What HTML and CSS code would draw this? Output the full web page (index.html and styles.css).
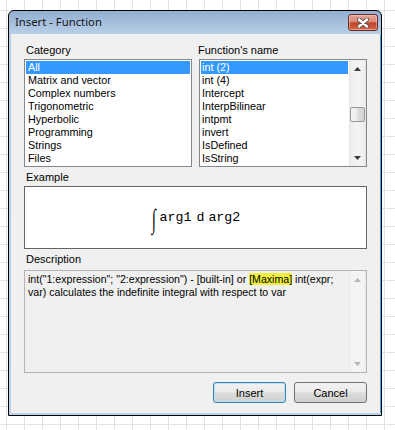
FILE: index.html
```html
<!DOCTYPE html>
<html>
<head>
<meta charset="utf-8">
<link rel="stylesheet" href="styles.css">
</head>
<body>
<div class="win">
  <div class="titlebar">
    <span class="title">Insert - Function</span>
    <div class="close">
      <svg width="12" height="10" viewBox="0 0 12 10">
        <path d="M2 1.5 L10 8.5 M10 1.5 L2 8.5" stroke="#5c4a48" stroke-width="4.2" stroke-linecap="round" fill="none"/>
        <path d="M2 1.5 L10 8.5 M10 1.5 L2 8.5" stroke="#ffffff" stroke-width="2.4" stroke-linecap="round" fill="none"/>
      </svg>
    </div>
  </div>
  <div class="client">
    <div class="lists">
      <div class="group cat">
        <div class="label">Category</div>
        <div class="listbox">
          <div class="items">
            <div class="item sel">All</div>
            <div class="item">Matrix and vector</div>
            <div class="item">Complex numbers</div>
            <div class="item">Trigonometric</div>
            <div class="item">Hyperbolic</div>
            <div class="item">Programming</div>
            <div class="item">Strings</div>
            <div class="item">Files</div>
          </div>
        </div>
      </div>
      <div class="group fn">
        <div class="label label-fn">Function's name</div>
        <div class="listbox">
          <div class="items items-fn">
            <div class="item sel">int (2)</div>
            <div class="item">int (4)</div>
            <div class="item">Intercept</div>
            <div class="item">InterpBilinear</div>
            <div class="item">intpmt</div>
            <div class="item">invert</div>
            <div class="item">IsDefined</div>
            <div class="item">IsString</div>
          </div>
          <div class="sb">
            <div class="sb-btn"><svg width="7" height="4" viewBox="0 0 7 4"><polygon points="3.5,0 7,4 0,4" fill="#3a3a3a"/></svg></div>
            <div class="thumb"></div>
            <div class="sb-btn sb-down"><svg width="7" height="4" viewBox="0 0 7 4"><polygon points="0,0 7,0 3.5,4" fill="#3a3a3a"/></svg></div>
          </div>
        </div>
      </div>
    </div>
    <div class="label label-sec">Example</div>
    <div class="example">
      <span class="integral">∫</span>
      <span class="mono">arg1</span>
      <span class="mono d">d</span>
      <span class="mono">arg2</span>
    </div>
    <div class="label label-sec">Description</div>
    <div class="desc">
      <div class="desc-text">
        <div class="line"><span>int("1:expression"; "2:expression") - [built-in] or</span> <mark class="hl">[Maxima]</mark> <span>int(expr;</span></div>
        <div class="line">var) calculates the indefinite integral with respect to var</div>
      </div>
      <div class="sb sb-off">
        <div class="sb-btn"><svg width="7" height="4" viewBox="0 0 7 4"><polygon points="3.5,0 7,4 0,4" fill="#b4b4b4"/></svg></div>
        <div class="sb-btn sb-down"><svg width="7" height="4" viewBox="0 0 7 4"><polygon points="0,0 7,0 3.5,4" fill="#b4b4b4"/></svg></div>
      </div>
    </div>
    <div class="buttons">
      <button class="btn focus">Insert</button>
      <button class="btn">Cancel</button>
    </div>
  </div>
</div>
</body>
</html>
```
FILE: styles.css
```css
html, body {
  margin: 0;
}
body {
  padding: 10px 0 0 8px;
  height: 430px;
  box-sizing: border-box;
  background-color: #ffffff;
  background-image:
    linear-gradient(90deg, #e2e2e2 1px, transparent 1px),
    linear-gradient(#e2e2e2 1px, transparent 1px);
  background-size: 18px 18px;
  background-position: 6px 10px;
  font-family: "Liberation Sans", Arial, sans-serif;
  font-size: 11px;
  color: #000;
}

.win {
  width: 374px;
  height: 406px;
  box-sizing: border-box;
  border: 1px solid #000;
  border-radius: 6px 6px 0 0;
  background: linear-gradient(#93aed0, #b7cfe8 23px, #b9d1ea);
  display: flex;
  flex-direction: column;
  overflow: hidden;
}

.titlebar {
  height: 23px;
  display: flex;
  justify-content: space-between;
  align-items: flex-start;
  padding-left: 6px;
}
.title {
  font-family: "Noto Sans", "Open Sans", sans-serif;
  font-size: 11.3px;
  line-height: 16px;
  margin-top: 3px;
  color: #151515;
}
.close {
  width: 30px;
  height: 17px;
  box-sizing: border-box;
  margin: 3px 3px 0 0;
  border: 1px solid #6a2c22;
  border-radius: 3px;
  background: linear-gradient(#e4a597 0%, #d88977 45%, #c2462c 52%, #c8553a 80%, #d66d4e 100%);
  box-shadow: inset 0 0 0 1px rgba(255, 220, 210, 0.45);
  display: flex;
  align-items: center;
  justify-content: center;
}
.close svg { display: block; }

.client {
  flex: 1;
  margin: 0 1px 2px 2px;
  background: #f0f0f0;
  padding: 10px 13px 10px 13px;
  display: flex;
  flex-direction: column;
  box-shadow: 1px 0 0 #3ea6e0;
}

.lists {
  display: flex;
  gap: 7px;
}
.cat { width: 168px; }
.fn { width: 168px; }

.label {
  height: 13px;
  line-height: 13px;
  padding-left: 2px;
  white-space: nowrap;
}
.label-fn { padding-left: 0; margin-left: -1px; }

.listbox {
  margin-top: 2px;
  height: 108px;
  box-sizing: border-box;
  border: 1px solid #828790;
  background: #fff;
  display: flex;
}
.items {
  flex: 1;
  padding: 1px;
  overflow: hidden;
}
.item {
  height: 13px;
  line-height: 13px;
  padding-left: 2px;
  white-space: nowrap;
  font-size: 10.8px;
}
.items-fn .item { padding-left: 1px; }
.item.sel {
  background: #3399ff;
  color: #fff;
}

.sb {
  width: 17px;
  display: flex;
  flex-direction: column;
  background: linear-gradient(90deg, #e4e4e4 0, #efefef 2px, #f4f4f4 50%, #efefef 15px, #e4e4e4 17px);
}
.sb-btn {
  height: 17px;
  display: flex;
  align-items: center;
  justify-content: center;
}
.sb-btn svg { display: block; }
.sb-down { margin-top: auto; }
.thumb {
  margin: 30px 1px 0 1px;
  height: 15px;
  box-sizing: border-box;
  border: 1px solid #979797;
  border-radius: 2px;
  background: linear-gradient(90deg, #f4f4f4 0%, #ececec 45%, #dcdcdc 55%, #d2d2d2 100%);
}
.sb-off {
  background: linear-gradient(90deg, #eaeaea 0, #f2f2f2 2px, #f5f5f5 50%, #f2f2f2 15px, #eaeaea 17px);
}

.label-sec { margin-top: 4px; }

.example {
  margin-top: 2px;
  height: 63px;
  box-sizing: border-box;
  border: 1px solid #646464;
  background: #fff;
  display: flex;
  align-items: center;
  justify-content: center;
}
.integral {
  font-family: "Liberation Serif", serif;
  font-size: 21px;
  line-height: 30px;
  display: inline-block;
  transform: scale(0.7, 1.3);
  margin-right: 3px;
  margin-top: 2px;
}
.mono {
  font-family: "Liberation Mono", monospace;
  font-size: 13.3px;
  line-height: 16px;
}
.d { margin: 0 4px 0 5px; }

.desc {
  margin-top: 4px;
  height: 103px;
  box-sizing: border-box;
  border: 1px solid #b5b5b5;
  background: #f0f0f0;
  display: flex;
}
.desc-text {
  flex: 1;
  padding: 2px 3px;
  line-height: 13px;
  font-size: 10.6px;
}
.line { white-space: nowrap; }
.hl {
  background: #f0f03a;
  color: #000;
}

.buttons {
  margin-top: 9px;
  display: flex;
  justify-content: flex-end;
  gap: 8px;
}
.btn {
  width: 73px;
  height: 21px;
  padding: 0;
  box-sizing: border-box;
  border: 1px solid #707070;
  border-radius: 3px;
  background: linear-gradient(#f2f2f2 0%, #ebebeb 45%, #dddddd 52%, #cfcfcf 100%);
  font-family: "Liberation Sans", Arial, sans-serif;
  font-size: 11px;
  color: #000;
}
.btn.focus {
  border-color: #3c7fb1;
  box-shadow: inset 0 0 0 1px #b6e3f8;
}
```
